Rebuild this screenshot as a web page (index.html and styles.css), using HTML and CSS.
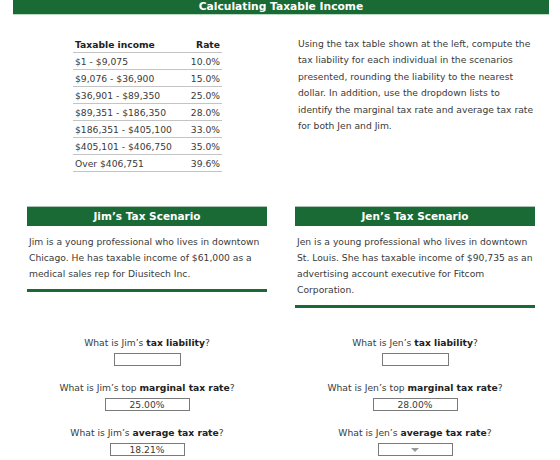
FILE: index.html
```html
<!DOCTYPE html>
<html lang="en">
<head>
    <meta charset="UTF-8">
    <meta name="viewport" content="width=device-width, initial-scale=1.0">
    <title>Calculating Taxable Income</title>
    <link rel="stylesheet" href="styles.css">
</head>
<body>

<h1 class="title-bar">Calculating Taxable Income</h1>

<!-- Tabela de alíquotas + instruções -->
<div class="cols intro">
    <table class="tax-table">
        <thead>
            <tr>
                <th>Taxable income</th>
                <th class="rate">Rate</th>
            </tr>
        </thead>
        <tbody>
            <tr><td>$1 - $9,075</td><td class="rate">10.0%</td></tr>
            <tr><td>$9,076 - $36,900</td><td class="rate">15.0%</td></tr>
            <tr><td>$36,901 - $89,350</td><td class="rate">25.0%</td></tr>
            <tr><td>$89,351 - $186,350</td><td class="rate">28.0%</td></tr>
            <tr><td>$186,351 - $405,100</td><td class="rate">33.0%</td></tr>
            <tr><td>$405,101 - $406,750</td><td class="rate">35.0%</td></tr>
            <tr><td>Over $406,751</td><td class="rate">39.6%</td></tr>
        </tbody>
    </table>

    <p class="instructions">Using the tax table shown at the left, compute the tax liability for each individual in the scenarios presented, rounding the liability to the nearest dollar. In addition, use the dropdown lists to identify the marginal tax rate and average tax rate for both Jen and Jim.</p>
</div>

<!-- Cenários -->
<div class="cols scenarios">
    <div class="scenario">
        <h2 class="scenario-title">Jim’s Tax Scenario</h2>
        <p class="scenario-text">Jim is a young professional who lives in downtown Chicago. He has taxable income of $61,000 as a medical sales rep for Diusitech Inc.</p>
        <div class="scenario-end"></div>
    </div>
    <div class="scenario">
        <h2 class="scenario-title">Jen’s Tax Scenario</h2>
        <p class="scenario-text">Jen is a young professional who lives in downtown St. Louis. She has taxable income of $90,735 as an advertising account executive for Fitcom Corporation.</p>
        <div class="scenario-end"></div>
    </div>
</div>

<!-- Perguntas -->
<div class="cols questions">
    <div class="question-col">
        <div class="question">
            <div class="q-label">What is Jim’s <b>tax liability</b>?</div>
            <div class="answer w-liab"></div>
        </div>
        <div class="question">
            <div class="q-label">What is Jim’s top <b>marginal tax rate</b>?</div>
            <div class="answer w-marg">25.00%</div>
        </div>
        <div class="question">
            <div class="q-label">What is Jim’s <b>average tax rate</b>?</div>
            <div class="answer w-avg">18.21%</div>
        </div>
    </div>
    <div class="question-col">
        <div class="question">
            <div class="q-label">What is Jen’s <b>tax liability</b>?</div>
            <div class="answer w-liab"></div>
        </div>
        <div class="question">
            <div class="q-label">What is Jen’s top <b>marginal tax rate</b>?</div>
            <div class="answer w-marg">28.00%</div>
        </div>
        <div class="question">
            <div class="q-label">What is Jen’s <b>average tax rate</b>?</div>
            <div class="answer w-avg"><span class="arrow"></span></div>
        </div>
    </div>
</div>

</body>
</html>
```

FILE: styles.css
```css
/* Estilos gerais */
body {
    margin: 0;
    font-family: "DejaVu Sans", Verdana, sans-serif;
    font-size: 9.2px;
    color: #3a3a3a;
    background: #fff;
}

.title-bar {
    margin: 0 11px 0 13px;
    height: 14px;
    line-height: 14px;
    background-color: #196a35;
    border-bottom: 1px solid #b9dcc3;
    color: #fff;
    font-size: 10.7px;
    font-weight: bold;
    text-align: center;
}

/* Duas colunas */
.cols {
    display: grid;
    grid-template-columns: 240px 240px;
    column-gap: 28px;
    padding-left: 27px;
}

/* Tabela */
.intro {
    margin-top: 21px;
    align-items: start;
}

.tax-table {
    margin-left: 46px;
    width: 149px;
    border-collapse: collapse;
}

.tax-table th,
.tax-table td {
    height: 16px;
    padding: 0 2px;
    text-align: left;
    border-bottom: 1px solid #c4c4c4;
    white-space: nowrap;
}

.tax-table th {
    color: #222;
    font-weight: bold;
}

.tax-table .rate {
    text-align: right;
}

.instructions {
    margin: 0 0 0 3px;
    width: 238px;
    line-height: 16.4px;
}

/* Cenários */
.scenarios {
    margin-top: 34px;
    align-items: start;
}

.scenario-title {
    margin: 0;
    height: 19px;
    line-height: 19px;
    background-color: #196a35;
    border-top: 1px solid #a9c4b0;
    color: #fff;
    font-size: 10.5px;
    font-weight: bold;
    text-align: center;
}

.scenario-text {
    margin: 8px 0 0 2px;
    line-height: 16px;
}

.scenario-end {
    margin-top: 7px;
    height: 3px;
    background-color: #196a35;
}

/* Perguntas */
.questions {
    margin-top: 27px;
}

.question {
    display: flex;
    flex-direction: column;
    align-items: center;
    margin-bottom: 14px;
}

.q-label {
    line-height: 16px;
}

.q-label b {
    color: #222;
}

.answer {
    box-sizing: border-box;
    margin-top: 2px;
    height: 13px;
    line-height: 11px;
    border: 1px solid #7a7a7a;
    background: #fff;
    text-align: center;
}

.w-liab { width: 67px; }
.w-marg { width: 85px; }
.w-avg { width: 75px; }

/* seta do dropdown */
.arrow {
    display: inline-block;
    width: 0;
    height: 0;
    border-left: 4px solid transparent;
    border-right: 4px solid transparent;
    border-top: 4px solid #999;
    vertical-align: 1px;
}
```
